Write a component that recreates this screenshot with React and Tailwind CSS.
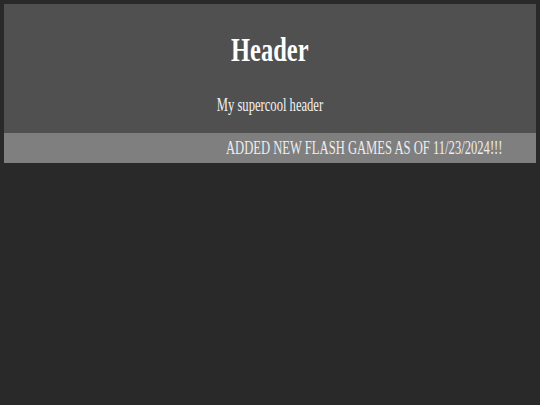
export default function App() {
  return (
    <div className="min-h-[405px] w-full bg-[#292929] pt-1 px-1" style={{ fontFamily: '"Liberation Serif", "Times New Roman", serif' }}>
      <div className="bg-[#505050] h-[129px] flex flex-col items-center pt-[29px]">
        <h1 className="text-[34px] leading-[34px] font-bold text-white inline-block scale-x-[0.72]">Header</h1>
        <p className="mt-[29px] text-[18px] leading-[18px] text-[#f2f2f2] inline-block scale-x-[0.7]">My supercool header</p>
      </div>
      <div className="bg-[#7f7f7f] h-[30px] flex">
        <span className="ml-[222px] text-[18px] leading-[30px] text-[#eeeeee] inline-block whitespace-nowrap origin-left scale-x-[0.7]">ADDED NEW FLASH GAMES AS OF 11/23/2024!!!</span>
      </div>
    </div>
  );
}
